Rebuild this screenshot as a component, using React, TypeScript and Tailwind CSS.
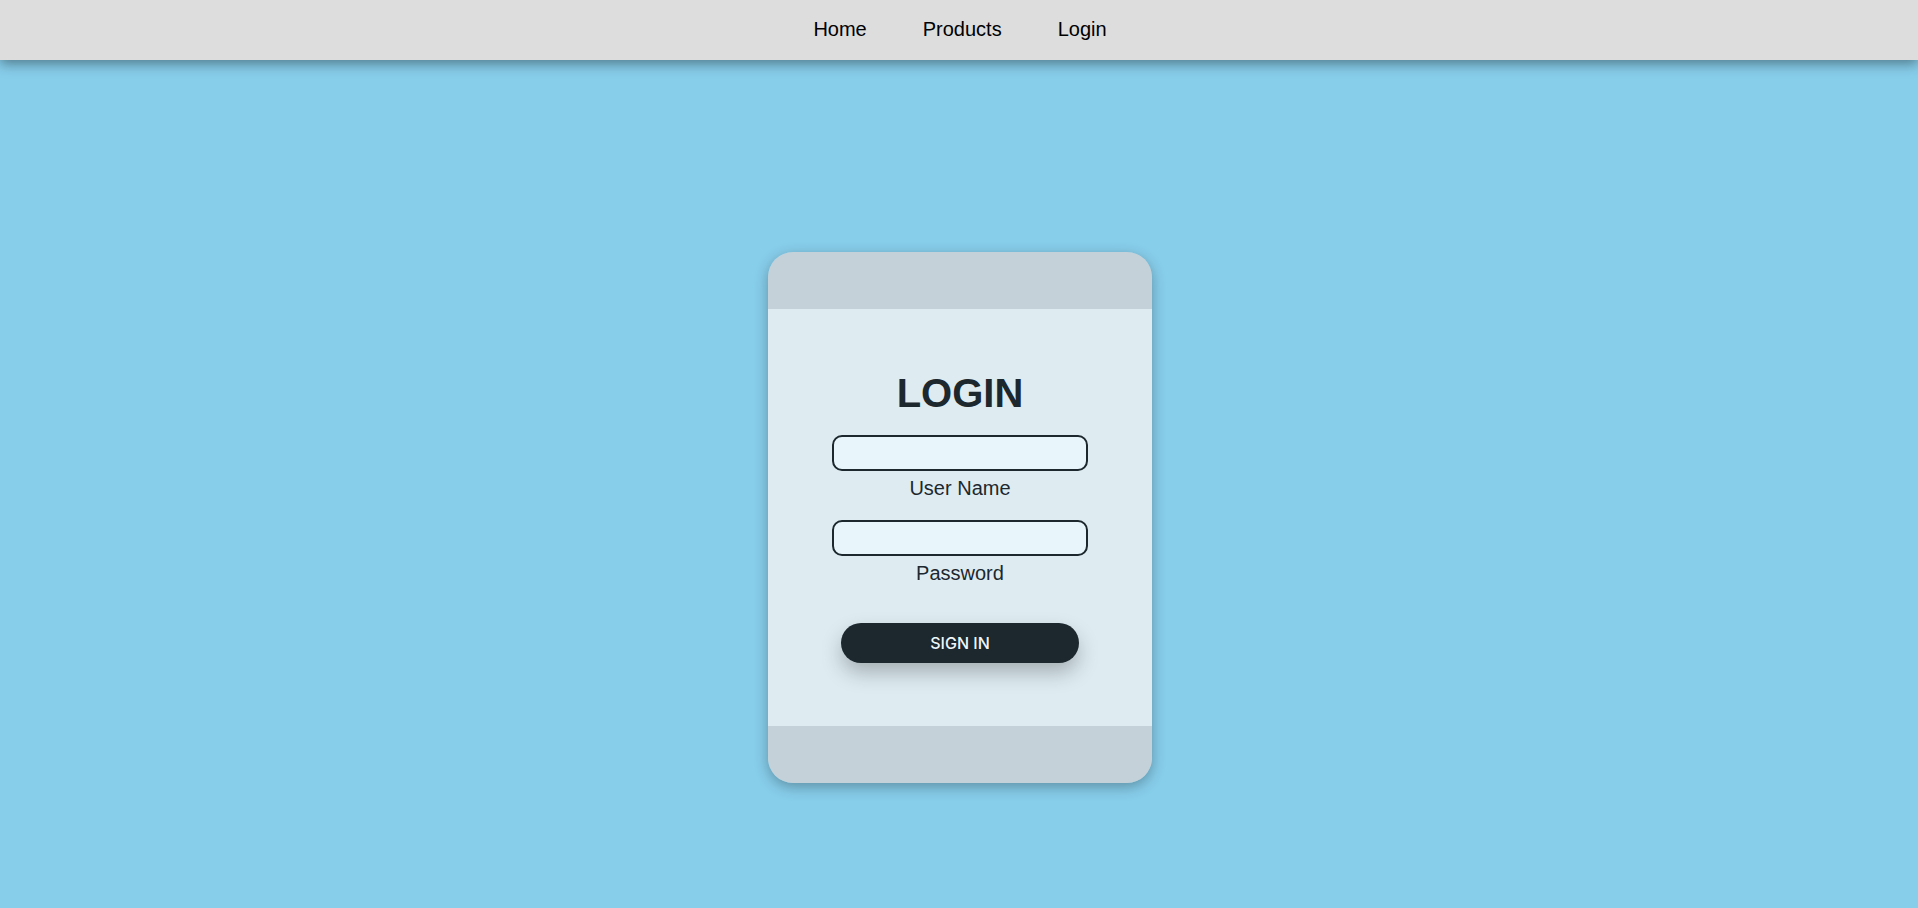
import React from 'react';

const NavBar = () => (
  <nav className="relative z-10 h-[60px] bg-[#dddddd] shadow-[0_4px_12px_rgba(0,0,0,0.4)]">
    <ul className="flex justify-center gap-[56px] pt-[18px] pl-[2px] text-[20px] leading-[23px] text-black">
      <li>Home</li>
      <li>Products</li>
      <li>Login</li>
    </ul>
  </nav>
);

const Field = ({ label, type }: { label: string; type: string }) => (
  <div className="flex flex-col items-center">
    <input
      type={type}
      className="w-[256px] h-[36px] rounded-[10px] border-2 border-[#1c282e] bg-[#e8f5fb] px-2 outline-none"
    />
    <label className="mt-[6px] text-[20px] leading-[23px] text-[#1c282e]">{label}</label>
  </div>
);

export default function App() {
  return (
    <div className="min-h-[908px] bg-[#87ceeb] font-['Liberation_Sans',Arial,sans-serif]">
      <NavBar />
      <main className="flex justify-center pt-[192px] pl-[2px] pb-[125px]">
        <div className="w-[384px] rounded-[25px] overflow-hidden shadow-[0_4px_14px_rgba(0,0,0,0.3)]">
          <div className="h-[57px] bg-[#c5d1d8]" />
          <div className="h-[417px] bg-[#deecf2] flex flex-col items-center pt-[61px]">
            <h1 className="text-[40px] leading-[46px] font-bold text-[#1c282e] mb-[19px]">LOGIN</h1>
            <Field label="User Name" type="text" />
            <div className="h-[20px]" />
            <Field label="Password" type="password" />
            <button className="mt-[38px] w-[238px] h-[40px] rounded-full bg-[#1c272e] text-[#eef6fa] text-[16px] font-medium font-['Inter',sans-serif] shadow-[0_10px_20px_rgba(0,0,0,0.25)]">
              SIGN IN
            </button>
          </div>
          <div className="h-[57px] bg-[#c5d1d8]" />
        </div>
      </main>
    </div>
  );
}
